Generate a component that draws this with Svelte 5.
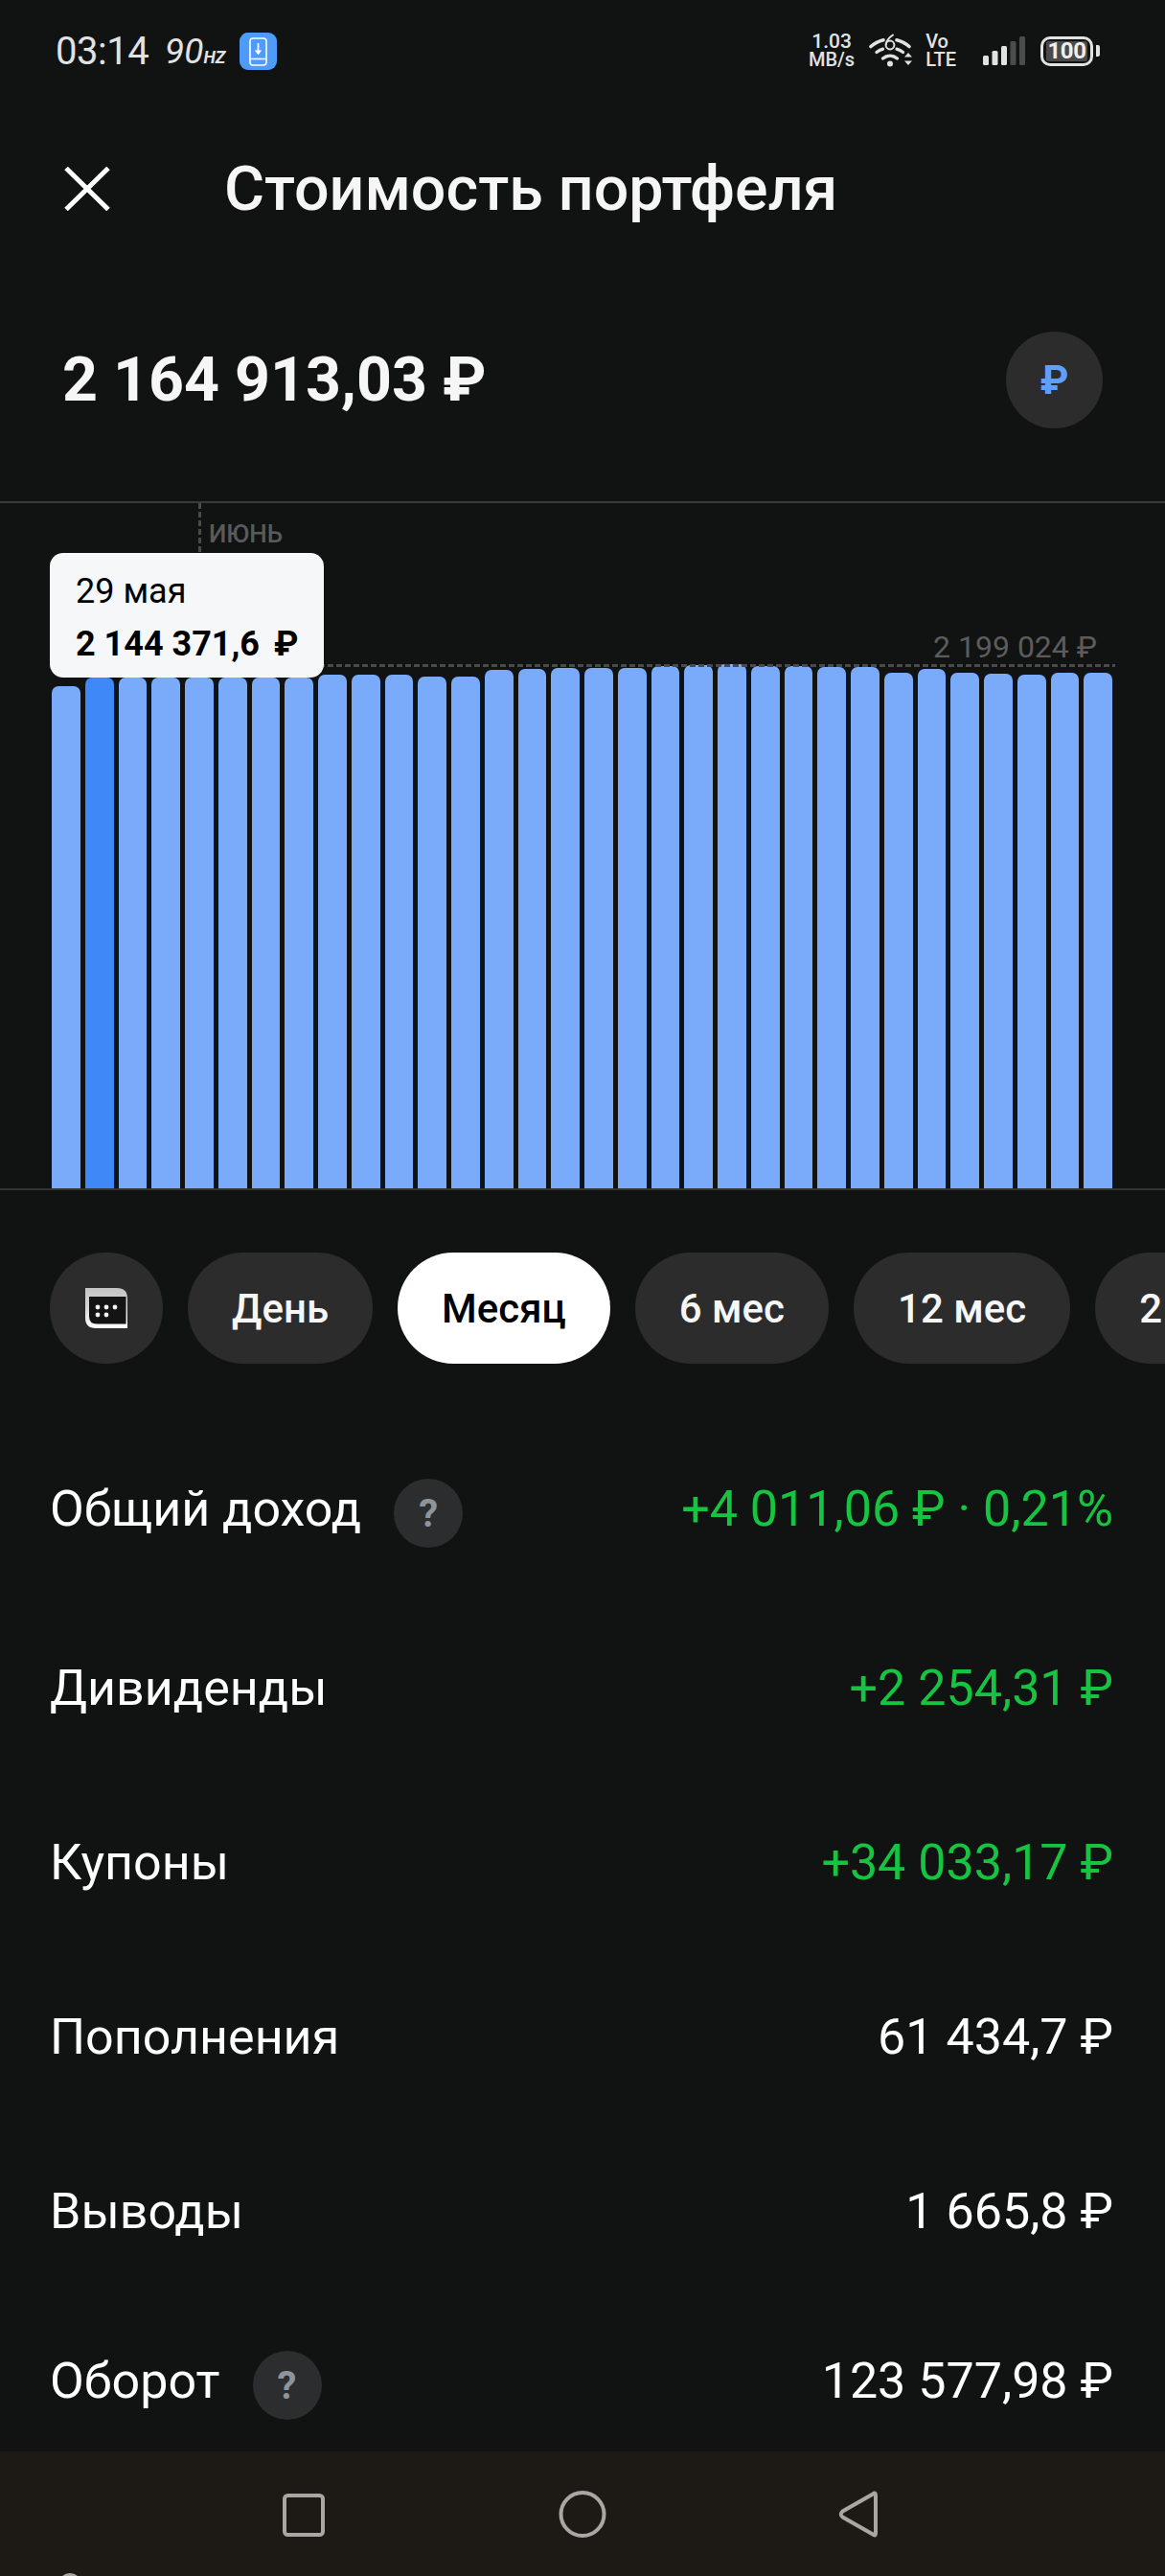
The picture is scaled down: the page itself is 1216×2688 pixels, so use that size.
<script>
  const barTops = [716,707,707,707,707,707,707,707,704,704,704,706,706,699,698,697,697,697,695,694,693,695,695,696,696,702,698,702,703,704,702,702];
  const bottom = 1240;
  const pills = [
    { label: 'День' },
    { label: 'Месяц', active: true },
    { label: '6 мес' },
    { label: '12 мес' },
    { label: '2 года' }
  ];
  const rows = [
    { label: 'Общий доход', value: '+4 011,06 ₽ · 0,21%', green: true, hint: true },
    { label: 'Дивиденды', value: '+2 254,31 ₽', green: true },
    { label: 'Купоны', value: '+34 033,17 ₽', green: true },
    { label: 'Пополнения', value: '61 434,7 ₽' },
    { label: 'Выводы', value: '1 665,8 ₽' },
    { label: 'Оборот', value: '123 577,98 ₽', hint: true }
  ];
</script>

<div class="page">
  <div class="status">
    <div class="status-left">
      <span class="time">03:14</span>
      <span class="hz"><i class="hz-num">90</i><i class="hz-unit">HZ</i></span>
      <span class="app-badge">
        <svg width="39" height="39" viewBox="0 0 39 39" fill="none">
          <rect x="11" y="6" width="17" height="28" rx="3" stroke="#fff" stroke-width="1.6"/>
          <path d="M11 27.5h17" stroke="#fff" stroke-width="1.6"/>
          <path d="M19.5 11v11" stroke="#fff" stroke-width="1.8"/>
          <path d="M15.8 18.6h7.4l-3.7 4.6z" fill="#fff"/>
        </svg>
      </span>
    </div>
    <div class="status-right">
      <span class="speed"><span class="speed-num">1.03</span><span class="speed-unit">MB/s</span></span>
      <svg class="wifi" width="46" height="36" viewBox="0 0 46 36" fill="none" stroke="#e2e2e2" stroke-linecap="round">
        <path d="M2 13.5C6 10 10 8 15 6.8" stroke-width="3.6"/>
        <path d="M29 6.8C34 8 38 10 42 13.5" stroke-width="3.6"/>
        <path d="M8 19.5C10 18 12 17 14.5 16.2" stroke-width="3.4"/>
        <path d="M29 16.2C31.5 17 33.5 18 35.5 19.5" stroke-width="3.4"/>
        <path d="M14.5 26C19 22.4 25 22.4 29.5 26" stroke-width="3.4"/>
        <circle cx="22" cy="31.5" r="3" fill="#e2e2e2" stroke="none"/>
        <circle cx="22" cy="12" r="4.4" stroke-width="2"/>
        <path d="M25 1.5C21 4 18.5 7.5 17.8 11" stroke-width="2"/>
        <path d="M37 24.5l4-4.500 4 4.500zM37 28.5h8l-4 4.500z" fill="#e2e2e2" stroke="none"/>
      </svg>
      <span class="volte"><span>Vo</span><span>LTE</span></span>
      <svg class="signal" width="44" height="30" viewBox="0 0 44 30">
        <rect x="0" y="20" width="6" height="10" rx="1.5" fill="#e2e2e2"/>
        <rect x="9.5" y="15" width="6" height="15" rx="1.5" fill="#e2e2e2"/>
        <rect x="19" y="10" width="6" height="20" rx="1.5" fill="#e2e2e2"/>
        <rect x="28.5" y="5" width="6" height="25" rx="1.5" fill="#4c4c4c"/>
        <rect x="38" y="0" width="6" height="30" rx="1.5" fill="#4c4c4c"/>
      </svg>
      <span class="battery">
        <span class="battery-body"><span class="battery-level">100</span></span>
        <span class="battery-cap"></span>
      </span>
    </div>
  </div>

  <header class="topbar">
    <svg class="close" width="48" height="46" viewBox="0 0 48 46" fill="none" stroke="#fff" stroke-width="5">
      <path d="M2 1.5L46 44.5M46 1.5L2 44.5"/>
    </svg>
    <h1>Стоимость портфеля</h1>
  </header>

  <section class="summary">
    <div class="amount">2 164 913,03 ₽</div>
    <button class="currency">₽</button>
  </section>

  <section class="chart">
    <div class="bars">
      {#each barTops as top, i}
        <div class="bar" class:selected={i === 1} style="height: {bottom - top}px"></div>
      {/each}
    </div>
    <div class="month-line"></div>
    <div class="month">ИЮНЬ</div>
    <div class="max-line"></div>
    <div class="max-label">2 199 024 ₽</div>
    <div class="tooltip">
      <div class="tip-date">29 мая</div>
      <div class="tip-value">2 144 371,6 <span class="tip-cur">₽</span></div>
    </div>
  </section>

  <div class="pills">
    <button class="pill icon-pill" aria-label="Календарь">
      <svg width="44" height="42" viewBox="0 0 44 42">
        <defs>
          <linearGradient id="cal" x1="0" y1="0" x2="0" y2="1">
            <stop offset="0" stop-color="#c4c4c4"/>
            <stop offset="0.5" stop-color="#d8d8d8"/>
            <stop offset="1" stop-color="#ffffff"/>
          </linearGradient>
        </defs>
        <path d="M0 0H33Q44 0 44 11V42H11Q0 42 0 31Z" fill="url(#cal)"/>
        <path d="M4 9H42.5V37.5H12Q4 37.5 4 29.5Z" fill="#141414"/>
        <g fill="#f2f2f2">
          <circle cx="13" cy="20" r="2.4"/><circle cx="22" cy="20" r="2.4"/><circle cx="31" cy="20" r="2.4"/>
          <circle cx="13" cy="28" r="2.4"/><circle cx="22" cy="28" r="2.4"/>
        </g>
      </svg>
    </button>
    {#each pills as p}
      <button class="pill" class:active={p.active}>{p.label}</button>
    {/each}
  </div>

  <div class="rows">
    {#each rows as r}
      <div class="row" class:with-hint={r.hint}>
        <div class="label">
          <span>{r.label}</span>
          {#if r.hint}<span class="hint">?</span>{/if}
        </div>
        <div class="value" class:green={r.green}>{r.value}</div>
      </div>
    {/each}
  </div>

  <nav class="navbar">
    <svg width="1216" height="130" viewBox="0 0 1216 130" fill="none" stroke="#a9a7a3" stroke-width="4">
      <rect x="297" y="46" width="40" height="41" rx="3.5"/>
      <circle cx="608" cy="65.5" r="22.5"/>
      <path d="M911 44.5Q914 42 914 46V85Q914 89 911 86.5L879.5 68.5Q876 65.5 879.5 62.5Z"/>
    </svg>
    <span class="nav-dot"></span>
  </nav>
</div>

<style>
  :global(body) {
    margin: 0;
    background: #111212;
  }
  .page {
    width: 1216px;
    height: 2688px;
    overflow: hidden;
    position: relative;
    background: #111212;
    color: #fff;
    font-family: Roboto, "Noto Sans", sans-serif;
    display: flex;
    flex-direction: column;
  }
  .status {
    height: 106px;
    flex: none;
    display: flex;
    justify-content: space-between;
    align-items: center;
    padding: 0 68px 0 58px;
    box-sizing: border-box;
    color: #e2e2e2;
  }
  .status-left, .status-right {
    display: flex;
    align-items: center;
  }
  .time {
    font-size: 40px;
    letter-spacing: -0.5px;
  }
  .hz {
    margin-left: 17px;
    display: flex;
    align-items: baseline;
  }
  .hz-num {
    font-size: 37px;
    font-style: italic;
  }
  .hz-unit {
    font-size: 18px;
    font-weight: 700;
    font-style: italic;
  }
  .app-badge {
    margin-left: 15px;
    width: 39px;
    height: 39px;
    border-radius: 9px;
    background: #4f9bfb;
    display: block;
  }
  .app-badge svg { display: block; }
  .speed, .volte {
    display: flex;
    flex-direction: column;
    align-items: center;
    font-weight: 500;
    line-height: 19px;
  }
  .speed-num { font-size: 21px; }
  .speed-unit { font-size: 20px; }
  .volte { font-size: 20px; margin-left: 13px; align-items: flex-start; }
  .wifi { margin-left: 15px; }
  .signal { margin-left: 28px; }
  .battery {
    margin-left: 16px;
    display: flex;
    align-items: center;
  }
  .battery-body {
    width: 55px;
    height: 31px;
    box-sizing: border-box;
    border: 3px solid #e2e2e2;
    border-radius: 10px;
    display: flex;
    align-items: center;
    justify-content: center;
    padding: 2px 3px;
  }
  .battery-level {
    background: #4a4a4a;
    color: #eee;
    font-size: 24px;
    font-weight: 700;
    line-height: 21px;
    letter-spacing: -0.5px;
    width: 100%;
    text-align: center;
    border-radius: 2px;
  }
  .battery-cap {
    width: 4px;
    height: 12px;
    margin-left: 3px;
    background: #e2e2e2;
    border-radius: 0 2px 2px 0;
  }
  .topbar {
    height: 182px;
    flex: none;
    display: flex;
    align-items: center;
    padding-left: 67px;
    box-sizing: border-box;
  }
  .close { flex: none; }
  h1 {
    margin: 0 0 0 119px;
    font-size: 64.5px;
    font-weight: 500;
    color: #f6f6f6;
    white-space: nowrap;
  }
  .summary {
    height: 235px;
    flex: none;
    display: flex;
    align-items: flex-start;
    justify-content: space-between;
    padding: 58px 65px 0 65px;
    box-sizing: border-box;
  }
  .amount {
    font-size: 64.5px;
    font-weight: 700;
    line-height: 100px;
    color: #f6f6f6;
  }
  .currency {
    width: 101px;
    height: 101px;
    border-radius: 50%;
    border: 0;
    padding: 0;
    background: #2c2c2c;
    color: #5f9fff;
    font-family: inherit;
    font-weight: 700;
    font-size: 42px;
  }
  .chart {
    height: 715px;
    flex: none;
    position: relative;
    border-top: 2px solid #3a3a3a;
    border-bottom: 2px solid #333;
  }
  .bars {
    height: 100%;
    margin: 0 55px 0 54px;
    display: flex;
    align-items: flex-end;
    gap: 5px;
  }
  .bar {
    flex: 1;
    background: #7aabfb;
    border-radius: 7px 7px 0 0;
  }
  .bar.selected { background: #3f88f8; }
  .month-line {
    position: absolute;
    left: 207px;
    top: 0;
    width: 3px;
    height: 52px;
    background: repeating-linear-gradient(to bottom, #4a4a4a 0 6px, transparent 6px 9px);
  }
  .month {
    position: absolute;
    left: 218px;
    top: 17px;
    font-size: 26px;
    font-weight: 500;
    line-height: 30px;
    color: #5a5a5a;
  }
  .max-line {
    position: absolute;
    left: 54px;
    right: 52px;
    top: 168px;
    height: 3px;
    background: repeating-linear-gradient(to right, #4a4a4a 0 6px, transparent 6px 9px);
  }
  .max-label {
    position: absolute;
    right: 71px;
    top: 131px;
    font-size: 32px;
    line-height: 38px;
    color: #5c5c5c;
  }
  .tooltip {
    position: absolute;
    left: 52px;
    top: 52px;
    width: 286px;
    height: 130px;
    box-sizing: border-box;
    padding: 13px 0 0 27px;
    border-radius: 14px;
    background: #f6f7f8;
    color: #000;
    font-size: 36px;
    line-height: 55px;
  }
  .tip-value { font-weight: 700; white-space: nowrap; }
  .tip-cur { margin-left: 6px; }
  .pills {
    flex: none;
    display: flex;
    gap: 26px;
    padding: 65px 0 0 52px;
    overflow: hidden;
    white-space: nowrap;
  }
  .pill {
    flex: none;
    height: 116px;
    padding: 0 46px;
    border: 0;
    border-radius: 58px;
    background: #2c2c2c;
    color: #f6f6f6;
    font-family: inherit;
    font-size: 42px;
    font-weight: 500;
  }
  .pill.active {
    background: #fff;
    color: #000;
  }
  .icon-pill {
    width: 118px;
    padding: 0;
    display: flex;
    align-items: center;
    justify-content: center;
  }
  .rows {
    flex: none;
    margin-top: 65px;
    padding: 0 54px 0 52px;
  }
  .row {
    height: 182px;
    box-sizing: border-box;
    display: flex;
    align-items: center;
    justify-content: space-between;
    font-size: 52px;
    white-space: nowrap;
  }
  .row.with-hint { padding-bottom: 10px; }
  .with-hint .hint { margin-top: 10px; }
  .label {
    display: flex;
    align-items: center;
  }
  .value.green { color: #17c441; }
  .hint {
    width: 72px;
    height: 72px;
    margin-left: 34px;
    border-radius: 50%;
    background: #2c2d2f;
    color: #8f939a;
    font-size: 40px;
    font-weight: 700;
    display: flex;
    align-items: center;
    justify-content: center;
  }
  .navbar {
    position: absolute;
    left: 0;
    right: 0;
    bottom: 0;
    height: 130px;
    background: #1d1a16;
  }
  .navbar svg { display: block; }
  .nav-dot {
    position: absolute;
    left: 61px;
    top: 127px;
    width: 24px;
    height: 24px;
    border-radius: 50%;
    background: #a9a7a3;
  }
</style>
